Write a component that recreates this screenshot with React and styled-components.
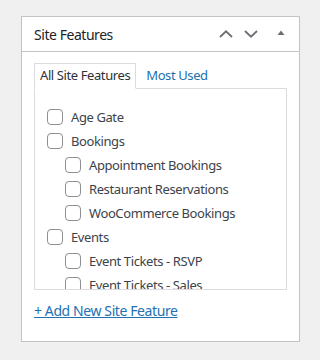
import React, { useState } from "react";
import styled, { createGlobalStyle, css } from "styled-components";

const GlobalStyle = createGlobalStyle`
  html, body {
    margin: 0;
    padding: 0;
    background: #f0f0f1;
  }
  body {
    font-family: "Noto Sans", "Open Sans", sans-serif;
    font-size: 13px;
    letter-spacing: -0.4px;
    color: #3c434a;
  }
`;

const Page = styled.div`
  padding: 16px 20px 0 21px;
`;

const Postbox = styled.div`
  width: 277px;
  background: #fff;
  border: 1px solid #c3c4c7;
  box-shadow: 0 1px 1px rgba(0, 0, 0, 0.04);
`;

const Header = styled.div`
  height: 34px;
  display: flex;
  align-items: center;
  border-bottom: 1px solid #c3c4c7;
`;

const Title = styled.h2`
  flex: 1;
  margin: 0;
  padding: 0 12px;
  font-size: 14px;
  font-weight: 400;
  letter-spacing: -0.45px;
  color: #1d2327;
`;

const HandleButton = styled.button`
  width: ${(p) => p.w}px;
  height: 34px;
  padding: 0 0 ${(p) => p.lift || 0}px;
  border: 0;
  background: none;
  display: flex;
  align-items: center;
  justify-content: center;
  color: #6c7075;
  cursor: pointer;
`;

const Inside = styled.div`
  padding: 11px 12px 20px;
`;

const Tabs = styled.ul`
  display: flex;
  gap: 4px;
  margin: 0 0 -1px;
  padding: 0;
  list-style: none;
`;

const Tab = styled.li`
  padding: 2px 5px 4px;
  line-height: 18px;
  border: 1px solid transparent;
  color: #2271b1;
  cursor: pointer;

  ${(p) =>
    p.active &&
    css`
      color: #2c3338;
      background: #fff;
      border-color: #dcdcde;
      border-bottom-color: #fff;
    `}
`;

const TabsPanel = styled.div`
  height: 200px;
  overflow: hidden;
  border: 1px solid #dcdcde;
  background: #fff;
`;

const Checklist = styled.ul`
  margin: 0;
  padding: 16px 0 0 12px;
  list-style: none;
`;

const Item = styled.li`
  height: 24px;
  display: flex;
  align-items: center;
  gap: 8px;
  padding-left: ${(p) => (p.child ? 18 : 0)}px;
  white-space: nowrap;
  color: #3c434a;
`;

const Checkbox = styled.span`
  width: 14px;
  height: 14px;
  flex: none;
  border: 1px solid #8c8f94;
  border-radius: 4px;
  background: #fff;
`;

const AddLink = styled.a`
  display: inline-block;
  margin-top: 11px;
  font-size: 14px;
  line-height: 20px;
  color: #2271b1;
  text-decoration: underline;
  cursor: pointer;
`;

const features = [
  { label: "Age Gate" },
  { label: "Bookings" },
  { label: "Appointment Bookings", child: true },
  { label: "Restaurant Reservations", child: true },
  { label: "WooCommerce Bookings", child: true },
  { label: "Events" },
  { label: "Event Tickets - RSVP", child: true },
  { label: "Event Tickets - Sales", child: true },
];

const ChevronUp = () => (
  <svg width="14" height="8" viewBox="0 0 14 8" fill="none" stroke="currentColor" strokeWidth="1.8">
    <path d="M1 7 L7 1.3 L13 7" />
  </svg>
);

const ChevronDown = () => (
  <svg width="14" height="8" viewBox="0 0 14 8" fill="none" stroke="currentColor" strokeWidth="1.8">
    <path d="M1 1 L7 6.7 L13 1" />
  </svg>
);

const Triangle = () => (
  <svg width="8" height="6" viewBox="0 0 8 6">
    <path d="M0.5 5 L4 0.5 L7.5 5 Z" fill="currentColor" />
  </svg>
);

export default function App() {
  const [tab, setTab] = useState("all");

  return (
    <>
      <GlobalStyle />
      <Page>
        <Postbox>
          <Header>
            <Title>Site Features</Title>
            <HandleButton w={25}>
              <ChevronUp />
            </HandleButton>
            <HandleButton w={25}>
              <ChevronDown />
            </HandleButton>
            <HandleButton w={36} lift={3}>
              <Triangle />
            </HandleButton>
          </Header>
          <Inside>
            <Tabs>
              <Tab active={tab === "all"} onClick={() => setTab("all")}>
                All Site Features
              </Tab>
              <Tab active={tab === "pop"} onClick={() => setTab("pop")}>
                Most Used
              </Tab>
            </Tabs>
            <TabsPanel>
              <Checklist>
                {features.map((f) => (
                  <Item key={f.label} child={f.child}>
                    <Checkbox />
                    {f.label}
                  </Item>
                ))}
              </Checklist>
            </TabsPanel>
            <AddLink>+ Add New Site Feature</AddLink>
          </Inside>
        </Postbox>
      </Page>
    </>
  );
}
